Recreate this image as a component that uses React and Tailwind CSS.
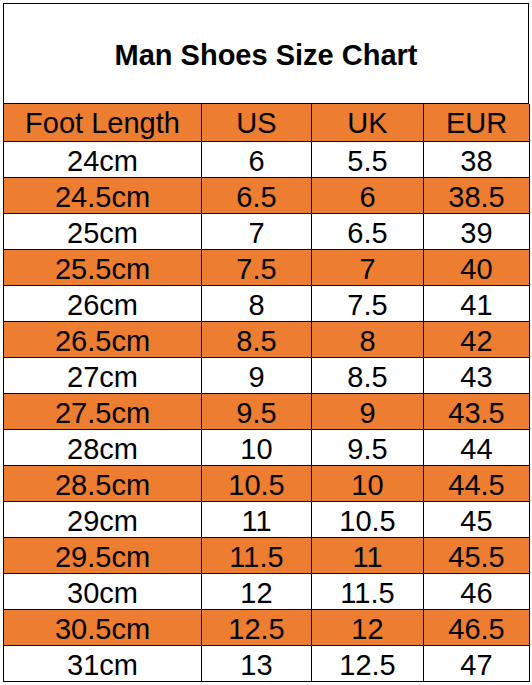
import React from "react";

const rows = [
    ["24cm", "6", "5.5", "38"],
    ["24.5cm", "6.5", "6", "38.5"],
    ["25cm", "7", "6.5", "39"],
    ["25.5cm", "7.5", "7", "40"],
    ["26cm", "8", "7.5", "41"],
    ["26.5cm", "8.5", "8", "42"],
    ["27cm", "9", "8.5", "43"],
    ["27.5cm", "9.5", "9", "43.5"],
    ["28cm", "10", "9.5", "44"],
    ["28.5cm", "10.5", "10", "44.5"],
    ["29cm", "11", "10.5", "45"],
    ["29.5cm", "11.5", "11", "45.5"],
    ["30cm", "12", "11.5", "46"],
    ["30.5cm", "12.5", "12", "46.5"],
    ["31cm", "13", "12.5", "47"],
];

const headers = ["Foot Length", "US", "UK", "EUR"];

export default function App() {
    return (
        <div className="bg-white w-[532px] h-[685px] pt-[3px] pl-[3px]" style={{ fontFamily: '"Liberation Sans", Arial, sans-serif' }}>
            <div className="w-[526px] border-l border-t border-black text-black">
                <div className="h-[100px] border-r border-b border-black flex items-center justify-center pt-[4px]">
                    <h1 className="text-[29px] font-bold">Man Shoes Size Chart</h1>
                </div>
                <div className="grid grid-cols-[198px_110px_112px_106px] bg-[#ed7d31] h-[38px]">
                    {headers.map((h) => (
                        <div key={h} className="border-r border-b border-black flex items-center justify-center text-[29px] leading-none pt-[2px]">
                            {h}
                        </div>
                    ))}
                </div>
                {rows.map((row, i) => (
                    <div
                        key={row[0]}
                        className={"grid grid-cols-[198px_110px_112px_106px] h-[36px] " + (i % 2 === 1 ? "bg-[#ed7d31]" : "bg-white")}
                    >
                        {row.map((cell, j) => (
                            <div key={j} className="border-r border-b border-black flex items-center justify-center text-[29px] leading-none pt-[3px]">
                                {cell}
                            </div>
                        ))}
                    </div>
                ))}
            </div>
        </div>
    );
}
